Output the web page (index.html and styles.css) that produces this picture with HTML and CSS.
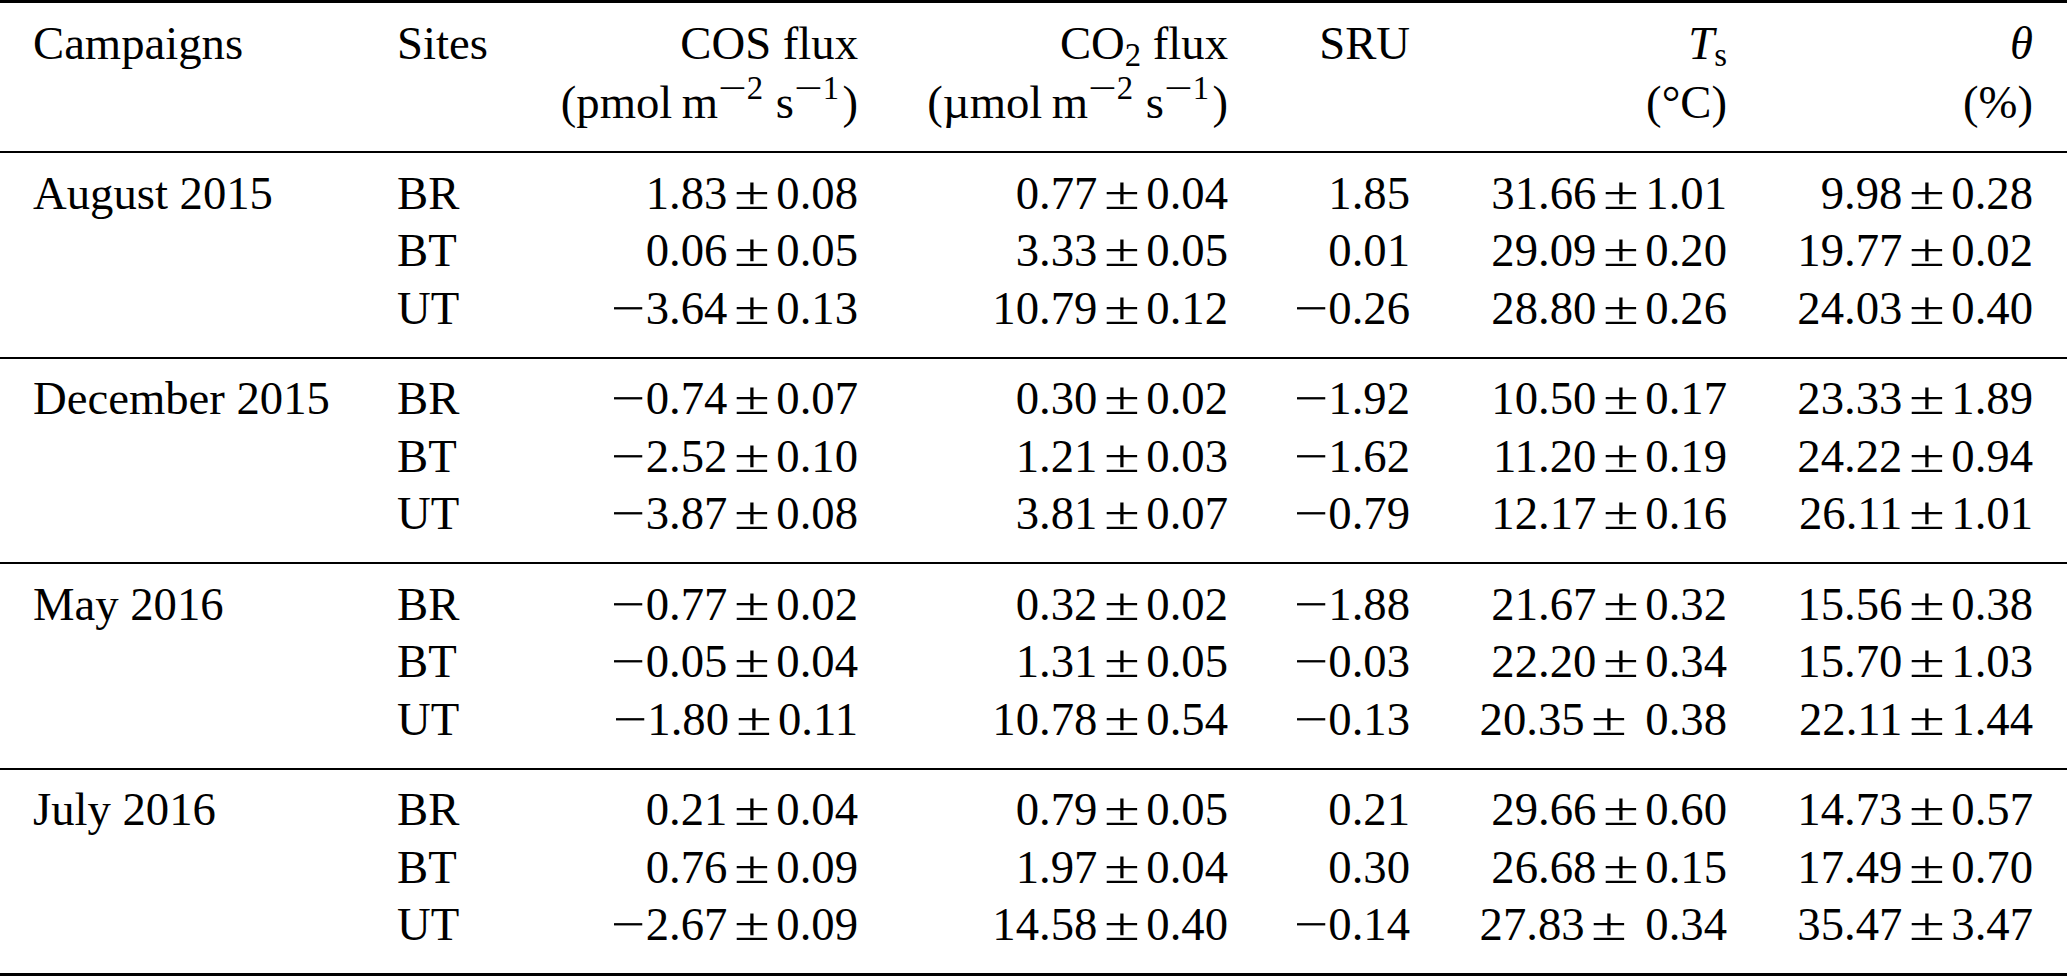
FILE: index.html
```html
<!DOCTYPE html>
<html lang="en">
<head>
<meta charset="utf-8">
<title>Campaign fluxes</title>
<link rel="stylesheet" href="styles.css">
</head>
<body>
<div class="tbl">
  <div class="row head">
    <div class="c l">Campaigns</div>
    <div class="c l">Sites</div>
    <div class="c r">COS flux<br>(pmol<span class="thin"></span>m<sup><span class="mn">−</span>2</sup><span class="thin"></span>s<sup><span class="mn">−</span>1</sup>)</div>
    <div class="c r">CO<sub>2</sub> flux<br>(µmol<span class="thin"></span>m<sup><span class="mn">−</span>2</sup><span class="thin"></span>s<sup><span class="mn">−</span>1</sup>)</div>
    <div class="c r">SRU</div>
    <div class="c r"><i>T</i><sub>s</sub><br>(°C)</div>
    <div class="c r"><i>θ</i><br>(%)</div>
  </div>

  <div class="group">
    <div class="row">
      <div class="c l">August 2015</div><div class="c l">BR</div>
      <div class="c r">1.83<span class="pm">±</span>0.08</div>
      <div class="c r">0.77<span class="pm">±</span>0.04</div>
      <div class="c r">1.85</div>
      <div class="c r">31.66<span class="pm">±</span>1.01</div>
      <div class="c r">9.98<span class="pm">±</span>0.28</div>
    </div>
    <div class="row">
      <div class="c l"></div><div class="c l">BT</div>
      <div class="c r">0.06<span class="pm">±</span>0.05</div>
      <div class="c r">3.33<span class="pm">±</span>0.05</div>
      <div class="c r">0.01</div>
      <div class="c r">29.09<span class="pm">±</span>0.20</div>
      <div class="c r">19.77<span class="pm">±</span>0.02</div>
    </div>
    <div class="row">
      <div class="c l"></div><div class="c l">UT</div>
      <div class="c r"><span class="mn">−</span>3.64<span class="pm">±</span>0.13</div>
      <div class="c r">10.79<span class="pm">±</span>0.12</div>
      <div class="c r"><span class="mn">−</span>0.26</div>
      <div class="c r">28.80<span class="pm">±</span>0.26</div>
      <div class="c r">24.03<span class="pm">±</span>0.40</div>
    </div>
  </div>

  <div class="group">
    <div class="row">
      <div class="c l">December 2015</div><div class="c l">BR</div>
      <div class="c r"><span class="mn">−</span>0.74<span class="pm">±</span>0.07</div>
      <div class="c r">0.30<span class="pm">±</span>0.02</div>
      <div class="c r"><span class="mn">−</span>1.92</div>
      <div class="c r">10.50<span class="pm">±</span>0.17</div>
      <div class="c r">23.33<span class="pm">±</span>1.89</div>
    </div>
    <div class="row">
      <div class="c l"></div><div class="c l">BT</div>
      <div class="c r"><span class="mn">−</span>2.52<span class="pm">±</span>0.10</div>
      <div class="c r">1.21<span class="pm">±</span>0.03</div>
      <div class="c r"><span class="mn">−</span>1.62</div>
      <div class="c r">11.20<span class="pm">±</span>0.19</div>
      <div class="c r">24.22<span class="pm">±</span>0.94</div>
    </div>
    <div class="row">
      <div class="c l"></div><div class="c l">UT</div>
      <div class="c r"><span class="mn">−</span>3.87<span class="pm">±</span>0.08</div>
      <div class="c r">3.81<span class="pm">±</span>0.07</div>
      <div class="c r"><span class="mn">−</span>0.79</div>
      <div class="c r">12.17<span class="pm">±</span>0.16</div>
      <div class="c r">26.11<span class="pm">±</span>1.01</div>
    </div>
  </div>

  <div class="group">
    <div class="row">
      <div class="c l">May 2016</div><div class="c l">BR</div>
      <div class="c r"><span class="mn">−</span>0.77<span class="pm">±</span>0.02</div>
      <div class="c r">0.32<span class="pm">±</span>0.02</div>
      <div class="c r"><span class="mn">−</span>1.88</div>
      <div class="c r">21.67<span class="pm">±</span>0.32</div>
      <div class="c r">15.56<span class="pm">±</span>0.38</div>
    </div>
    <div class="row">
      <div class="c l"></div><div class="c l">BT</div>
      <div class="c r"><span class="mn">−</span>0.05<span class="pm">±</span>0.04</div>
      <div class="c r">1.31<span class="pm">±</span>0.05</div>
      <div class="c r"><span class="mn">−</span>0.03</div>
      <div class="c r">22.20<span class="pm">±</span>0.34</div>
      <div class="c r">15.70<span class="pm">±</span>1.03</div>
    </div>
    <div class="row">
      <div class="c l"></div><div class="c l">UT</div>
      <div class="c r"><span class="mn">−</span>1.80<span class="pm">±</span>0.11</div>
      <div class="c r">10.78<span class="pm">±</span>0.54</div>
      <div class="c r"><span class="mn">−</span>0.13</div>
      <div class="c r">20.35<span class="pm wide">±</span>0.38</div>
      <div class="c r">22.11<span class="pm">±</span>1.44</div>
    </div>
  </div>

  <div class="group last">
    <div class="row">
      <div class="c l">July 2016</div><div class="c l">BR</div>
      <div class="c r">0.21<span class="pm">±</span>0.04</div>
      <div class="c r">0.79<span class="pm">±</span>0.05</div>
      <div class="c r">0.21</div>
      <div class="c r">29.66<span class="pm">±</span>0.60</div>
      <div class="c r">14.73<span class="pm">±</span>0.57</div>
    </div>
    <div class="row">
      <div class="c l"></div><div class="c l">BT</div>
      <div class="c r">0.76<span class="pm">±</span>0.09</div>
      <div class="c r">1.97<span class="pm">±</span>0.04</div>
      <div class="c r">0.30</div>
      <div class="c r">26.68<span class="pm">±</span>0.15</div>
      <div class="c r">17.49<span class="pm">±</span>0.70</div>
    </div>
    <div class="row">
      <div class="c l"></div><div class="c l">UT</div>
      <div class="c r"><span class="mn">−</span>2.67<span class="pm">±</span>0.09</div>
      <div class="c r">14.58<span class="pm">±</span>0.40</div>
      <div class="c r"><span class="mn">−</span>0.14</div>
      <div class="c r">27.83<span class="pm wide">±</span>0.34</div>
      <div class="c r">35.47<span class="pm">±</span>3.47</div>
    </div>
  </div>
</div>
</body>
</html>
```

FILE: styles.css
```css
html, body {
  margin: 0;
  padding: 0;
  background: #ffffff;
}

body {
  width: 2067px;
  height: 976px;
  overflow: hidden;
  color: #000000;
  font-family: "Liberation Serif", "Times New Roman", serif;
  font-size: 46.7px;
}

.tbl {
  width: 2067px;
}

.row {
  display: grid;
  grid-template-columns: 364px 130px 331px 370px 182px 317px 306px;
  padding: 0 34px 0 33px;
  line-height: 57.5px;
}

.head {
  border-top: 3px solid #000;
  padding-top: 10.75px;
  padding-bottom: 19.25px;
  line-height: 59px;
}

.group {
  border-top: 2px solid #000;
  padding-top: 11.5px;
  padding-bottom: 19.5px;
}

.group.last {
  border-bottom: 3px solid #000;
}

.c {
  white-space: nowrap;
}

.l {
  text-align: left;
}

.r {
  text-align: right;
}

/* math plus-minus: wider than the text glyph */
.pm {
  display: inline-block;
  transform: scaleX(1.4);
  margin: 0 0.25em;
}

.pm.wide {
  margin-right: 0.5em;
}

/* math minus: longer than the text glyph */
.mn {
  display: inline-block;
  transform: scaleX(1.3);
  margin: 0 0.09em;
}

.thin {
  display: inline-block;
  width: 0.2em;
}

sup {
  font-size: 0.7em;
  line-height: 0;
  vertical-align: 0.57em;
  margin-right: 0.1em;
}

sup .mn {
  transform: scaleX(1.55);
  margin: 0 0.16em;
}

sub {
  font-size: 0.7em;
  line-height: 0;
  vertical-align: -0.2em;
}

i {
  font-style: italic;
}
```
